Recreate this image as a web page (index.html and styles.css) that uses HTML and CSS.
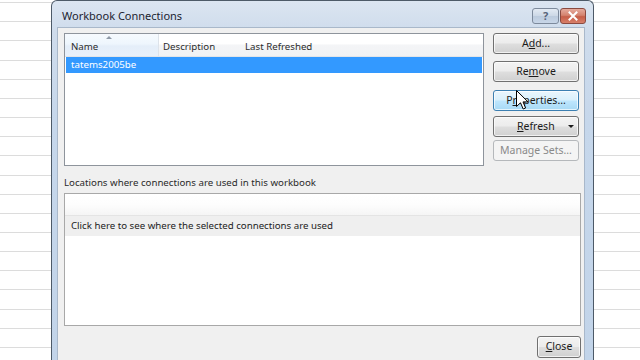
FILE: index.html
```html
<!DOCTYPE html>
<html>
<head>
<meta charset="utf-8">
<link rel="stylesheet" href="styles.css">
</head>
<body>
<div class="desk">
  <div class="dialog">
    <div class="titlebar">
      <span class="title">Workbook Connections</span>
      <div class="tbtns">
        <div class="tb help"><span>?</span></div>
        <div class="tb close">
          <svg width="12" height="10" viewBox="0 0 12 10"><path d="M2.5 1.5 L9.5 8.5 M9.5 1.5 L2.5 8.5" stroke="#fff" stroke-width="2" stroke-linecap="square"/></svg>
        </div>
      </div>
    </div>
    <div class="client">
      <div class="toprow">
        <div class="listview">
          <div class="lvhead">
            <div class="hcell hname">Name<span class="sort"></span></div>
            <div class="hcell hdesc">Description</div>
            <div class="hcell hlast">Last Refreshed</div>
          </div>
          <div class="lvrow sel">tatems2005be</div>
        </div>
        <div class="btncol">
          <div class="btn b-add">A<u>d</u>d...</div>
          <div class="btn b-remove">Re<u>m</u>ove</div>
          <div class="btn b-props hover">P<u>r</u>operties...</div>
          <div class="btn b-refresh"><span class="rtext"><u>R</u>efresh</span><span class="caret"></span></div>
          <div class="btn b-manage disabled">Manage Sets...</div>
        </div>
      </div>
      <div class="label">Locations where connections are used in this workbook</div>
      <div class="locbox">
        <div class="lochead"></div>
        <div class="locrow">Click here to see where the selected connections are used</div>
      </div>
      <div class="bottomrow">
        <div class="btn b-close"><u>C</u>lose</div>
      </div>
    </div>
  </div>
</div>
<svg class="cursor" width="13" height="20" viewBox="0 0 13 20"><path d="M0.5 0.5 L0.5 16.5 L4.5 12.8 L7.2 19 L9.6 18 L7 11.9 L12 11.9 Z" fill="#fff" stroke="#000" stroke-width="1"/></svg>
</body>
</html>
```
FILE: styles.css
```css
html, body {
  margin: 0;
  padding: 0;
}
body {
  width: 640px;
  height: 360px;
  overflow: hidden;
  position: relative;
  font-family: "Noto Sans", "Open Sans", sans-serif;
  font-size: 9.7px;
  color: #1e1e1e;
  background: #fff repeating-linear-gradient(to bottom, transparent 0, transparent 2.2px, #dcdcdc 2.2px, #dcdcdc 3.2px, transparent 3.2px, transparent 19.15px);
}
.desk {
  display: flex;
  padding-left: 51px;
  height: 360px;
}
.dialog {
  height: 372px;
  border: 1px solid #4d5a68;
  border-bottom: none;
  border-radius: 6px 6px 0 0;
  background: linear-gradient(to bottom, #dbe5f1 0, #cfdcec 30px, #c6d7eb 120px, #c2d4e9 360px);
  padding: 0 8px 0 6px;
  box-sizing: content-box;
  width: 527px;
  display: flex;
  flex-direction: column;
}
.titlebar {
  height: 26px;
  display: flex;
  align-items: center;
  padding-left: 4px;
}
.title {
  font-size: 11px;
  color: #1c2430;
  flex: 1;
  margin-top: 3px;
}
.tbtns {
  display: flex;
  gap: 1px;
  margin-top: 4px;
  margin-right: -1px;
}
.tb {
  width: 25px;
  height: 14px;
  border: 1px solid #7d8a9c;
  border-radius: 3px;
  display: flex;
  align-items: center;
  justify-content: center;
  box-sizing: content-box;
}
.help {
  background: linear-gradient(to bottom, #e3eaf3 0, #ccd8e6 50%, #bccbdd 51%, #c8d6e8 100%);
  color: #56647a;
  font-size: 11px;
  font-weight: bold;
}
.help span { margin-top: -1px; }
.close {
  width: 24px;
  border-color: #8a4a40;
  background: linear-gradient(to bottom, #e6ab9d 0, #d4836f 45%, #c65e48 55%, #d8806a 100%);
}
.client {
  flex: 1;
  background: #f0f0f0;
  border: 1px solid #a9b8ca;
  border-bottom: none;
  margin-left: -1px;
  padding: 5px 3px 0 6px;
}
.toprow {
  display: flex;
  gap: 9px;
}
.listview {
  width: 418px;
  height: 131px;
  border: 1px solid #8e949c;
  background: #fff;
}
.lvhead {
  display: flex;
  height: 22px;
  background: linear-gradient(to bottom, #ffffff 0, #ffffff 45%, #f4f5f7 50%, #f1f2f4 100%);
  border-bottom: 1px solid #e3e5e8;
}
.hcell {
  display: flex;
  align-items: center;
  position: relative;
  padding-top: 3px;
  color: #2c2c2c;
}
.hname {
  width: 87px;
  padding-left: 6px;
  background: linear-gradient(to bottom, #f6fafe 0, #eef6fd 45%, #e4eef9 55%, #e9f1fa 100%);
  border-right: 1px solid #dde3ea;
}
.sort {
  position: absolute;
  left: 41px;
  top: 2px;
  width: 0;
  height: 0;
  border-left: 3px solid transparent;
  border-right: 3px solid transparent;
  border-bottom: 3px solid #8f9aa8;
}
.hdesc {
  width: 82px;
  padding-left: 4px;
}
.hlast {
  padding-left: 0;
}
.lvrow {
  height: 16px;
  line-height: 16px;
  margin: 0 1px;
  padding-left: 5px;
}
.lvrow.sel {
  background: #3399ff;
  color: #fff;
}
.btncol {
  width: 86px;
  display: flex;
  flex-direction: column;
}
.btn {
  border: 1px solid #707070;
  border-radius: 3px;
  background: linear-gradient(to bottom, #f3f3f3 0, #ececec 48%, #dedede 52%, #d0d0d0 100%);
  box-shadow: inset 0 0 0 1px rgba(255,255,255,0.7);
  display: flex;
  align-items: center;
  justify-content: center;
  color: #1b1b1b;
  font-size: 10.5px;
  box-sizing: border-box;
  height: 21px;
  padding-bottom: 2px;
}
.btn u { text-decoration-thickness: 1px; text-underline-offset: 1px; }
.b-remove { margin-top: 7px; }
.b-props { margin-top: 8px; }
.b-refresh { margin-top: 5px; justify-content: flex-start; position: relative; }
.b-manage { margin-top: 3px; }
.btn.hover {
  border-color: #3c7fb1;
  background: linear-gradient(to bottom, #eaf6fd 0, #d9f0fc 48%, #bee6fd 52%, #a7d9f5 100%);
}
.rtext { margin-left: 23px; }
.caret {
  position: absolute;
  right: 4px;
  top: 8px;
  width: 0;
  height: 0;
  border-left: 3px solid transparent;
  border-right: 3px solid transparent;
  border-top: 3px solid #1b1b1b;
}
.btn.disabled {
  border-color: #b5b8bb;
  background: #f4f4f4;
  box-shadow: none;
  color: #8a8a8a;
}
.label {
  margin-top: 10px;
  line-height: 14px;
  color: #2a2a2a;
}
.locbox {
  margin-top: 3px;
  width: 515px;
  height: 131px;
  border: 1px solid #a8a8a8;
  background: #fff;
}
.lochead {
  height: 21px;
  background: linear-gradient(to bottom, #ffffff 0, #fdfdfd 50%, #f5f5f5 100%);
  border-bottom: 1px solid #e4e4e4;
}
.locrow {
  height: 20px;
  line-height: 19px;
  background: #efefef;
  padding-left: 6px;
  color: #222;
}
.bottomrow {
  display: flex;
  justify-content: flex-end;
  margin-top: 10px;
  width: 517px;
}
.b-close {
  width: 44px;
  height: 22px;
}
.cursor {
  position: absolute;
  left: 516px;
  top: 90px;
}
```
